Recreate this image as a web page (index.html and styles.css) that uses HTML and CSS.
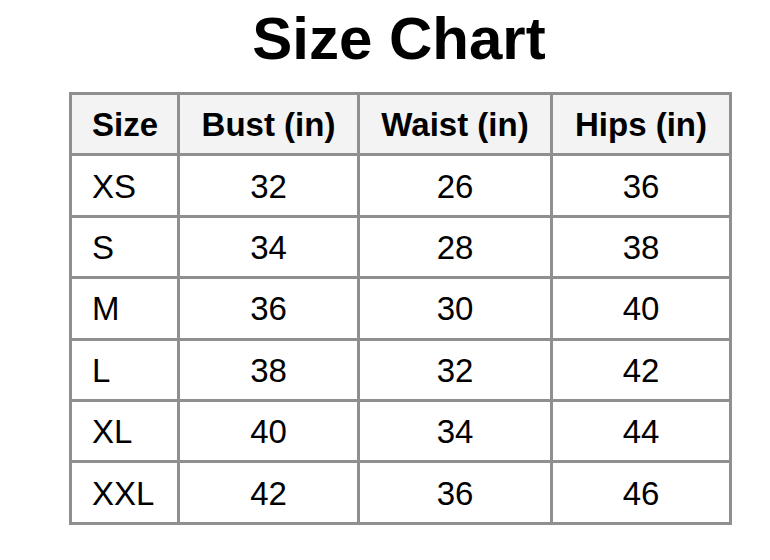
FILE: index.html
```html
<!DOCTYPE html>
<html>
<head>
<meta charset="utf-8">
<link rel="stylesheet" href="styles.css">
</head>
<body>
<div class="wrap">
  <h1 class="title">Size Chart</h1>
  <table class="chart">
    <colgroup>
      <col class="c1"><col class="c2"><col class="c3"><col class="c4">
    </colgroup>
    <thead>
      <tr><th class="first">Size</th><th>Bust (in)</th><th>Waist (in)</th><th>Hips (in)</th></tr>
    </thead>
    <tbody>
      <tr><td class="first">XS</td><td>32</td><td>26</td><td>36</td></tr>
      <tr><td class="first">S</td><td>34</td><td>28</td><td>38</td></tr>
      <tr><td class="first">M</td><td>36</td><td>30</td><td>40</td></tr>
      <tr><td class="first">L</td><td>38</td><td>32</td><td>42</td></tr>
      <tr><td class="first">XL</td><td>40</td><td>34</td><td>44</td></tr>
      <tr><td class="first">XXL</td><td>42</td><td>36</td><td>46</td></tr>
    </tbody>
  </table>
</div>
</body>
</html>
```
FILE: styles.css
```css
html, body {
  margin: 0;
  padding: 0;
  background: #ffffff;
}
body {
  font-family: "Liberation Sans", Arial, sans-serif;
  color: #000;
}
.wrap {
  width: 660px;
  margin-left: 69px;
  padding-top: 9px;
}
.title {
  margin: 0;
  font-size: 60px;
  line-height: 60px;
  font-weight: bold;
  text-align: center;
  height: 83px;
}
.chart {
  border-collapse: collapse;
  table-layout: fixed;
  width: 660px;
  border: 3px solid #8f8f8f;
}
.c1 { width: 108px; }
.c2 { width: 180px; }
.c3 { width: 193px; }
.c4 { width: 179px; }
.chart th, .chart td {
  border: 3px solid #8f8f8f;
  height: 56.4px;
  padding: 2px 0 0 0;
  font-size: 33px;
  text-align: center;
  vertical-align: middle;
}
.chart th {
  background: #f3f3f3;
  font-weight: bold;
}
.chart .first {
  text-align: left;
  padding-left: 20px;
}
```
